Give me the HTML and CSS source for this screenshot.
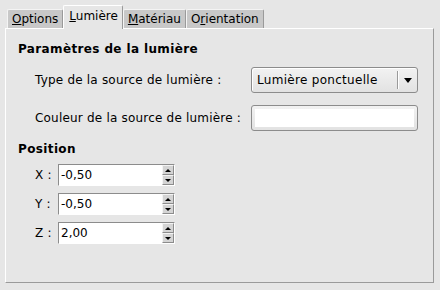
FILE: index.html
```html
<!DOCTYPE html>
<html>
<head>
<meta charset="utf-8">
<link rel="stylesheet" href="styles.css">
</head>
<body>
<div class="notebook">
  <div class="tabs">
    <div class="tab"><u>O</u>ptions</div>
    <div class="tab active"><u>L</u>umière</div>
    <div class="tab"><u>M</u>atériau</div>
    <div class="tab">O<u>r</u>ientation</div>
  </div>
  <div class="panel">
    <div class="heading">Paramètres de la lumière</div>
    <div class="form">
      <div class="label">Type de la source de lumière :</div>
      <div class="combo">
        <span class="combo-text">Lumière ponctuelle</span>
        <span class="combo-sep"></span>
        <span class="combo-arrow"></span>
      </div>
      <div class="label">Couleur de la source de lumière :</div>
      <div class="colorbtn"><span class="swatch"></span></div>
    </div>
    <div class="heading heading-pos">Position</div>
    <div class="spins">
      <div class="spin-label">X :</div>
      <div class="spin"><span class="spin-entry">-0,50</span><span class="spin-btns"><span class="up"></span><span class="down"></span></span></div>
      <div class="spin-label">Y :</div>
      <div class="spin"><span class="spin-entry">-0,50</span><span class="spin-btns"><span class="up"></span><span class="down"></span></span></div>
      <div class="spin-label">Z :</div>
      <div class="spin"><span class="spin-entry">2,00</span><span class="spin-btns"><span class="up"></span><span class="down"></span></span></div>
    </div>
  </div>
</div>
</body>
</html>
```

FILE: styles.css
```css
html, body {
  margin: 0;
  padding: 0;
  background: #e6e6e6;
  font-family: "DejaVu Sans", sans-serif;
  font-size: 12px;
  color: #000;
}
.notebook {
  padding: 5px 6px 0 5px;
}
.tabs {
  display: flex;
  align-items: flex-end;
  padding-left: 2px;
  height: 23px;
  position: relative;
  z-index: 1;
}
.tab {
  height: 18px;
  line-height: 18px;
  padding: 0 4px;
  background: #c8c8c8;
  border: 1px solid #9a9a9a;
  border-bottom: none;
  border-top-color: #f4f4f4;
  border-left-color: #f4f4f4;
  border-radius: 2px 2px 0 0;
}
.tab u { text-decoration: underline; text-underline-offset: 1px; }
.tab.active {
  background: #e6e6e6;
  height: 23px;
  line-height: 20px;
  border-color: #ffffff #9a9a9a #e6e6e6 #ffffff;
  margin-bottom: -1px;
  padding: 0 4px 0 5px;
}
.panel {
  height: 255px;
  box-sizing: border-box;
  background: #e6e6e6;
  border: 1px solid;
  border-color: #ffffff #9a9a9a #9a9a9a #ffffff;
  padding: 12px 15px 0 12px;
}
.heading {
  font-weight: bold;
  font-size: 12px;
  line-height: 16px;
  letter-spacing: 0.37px;
}
.label {
  letter-spacing: 0.2px;
}
.form {
  display: grid;
  grid-template-columns: 216px 167px;
  row-gap: 12px;
  margin: 10px 0 0 17px;
  align-items: center;
}
.combo {
  height: 26px;
  box-sizing: border-box;
  border: 1px solid #8c8c8c;
  border-radius: 3px;
  background: linear-gradient(#f2f2f2, #e2e2e2);
  box-shadow: inset 1px 1px 0 #fff;
  display: flex;
  align-items: center;
  padding-left: 5px;
}
.combo-text { flex: 1; letter-spacing: 0.3px; }
.combo-sep {
  width: 1px;
  height: 18px;
  background: #9a9a9a;
  box-shadow: 1px 0 0 #fff;
  margin-right: 6px;
}
.combo-arrow {
  width: 0;
  height: 0;
  border-left: 4px solid transparent;
  border-right: 4px solid transparent;
  border-top: 5px solid #000;
  margin-right: 5px;
}
.colorbtn {
  height: 26px;
  box-sizing: border-box;
  border: 1px solid #8c8c8c;
  border-radius: 3px;
  background: linear-gradient(#f2f2f2, #e2e2e2);
  padding: 3px;
  display: flex;
}
.swatch {
  flex: 1;
  background: #fff;
}
.heading-pos {
  margin-top: 10px;
}
.spins {
  display: grid;
  grid-template-columns: 23px 117px;
  row-gap: 7px;
  margin: 7px 0 0 17px;
  align-items: center;
}
.spin-label { letter-spacing: 0.2px; }
.spin {
  height: 22px;
  box-sizing: border-box;
  display: flex;
  border: 1px solid;
  border-color: #8c8c8c #ffffff #ffffff #8c8c8c;
  background: #fff;
}
.spin-entry {
  flex: 1;
  line-height: 20px;
  padding-left: 2px;
}
.spin-btns {
  width: 12px;
  display: flex;
  flex-direction: column;
  background: #d4d4d4;
}
.spin-btns span {
  flex: 1;
  display: flex;
  align-items: center;
  justify-content: center;
  border: 1px solid;
  border-color: #f4f4f4 #8c8c8c #8c8c8c #f4f4f4;
}
.spin-btns .up::before {
  content: "";
  border-left: 3px solid transparent;
  border-right: 3px solid transparent;
  border-bottom: 3px solid #000;
}
.spin-btns .down::before {
  content: "";
  border-left: 3px solid transparent;
  border-right: 3px solid transparent;
  border-top: 3px solid #000;
}
```
